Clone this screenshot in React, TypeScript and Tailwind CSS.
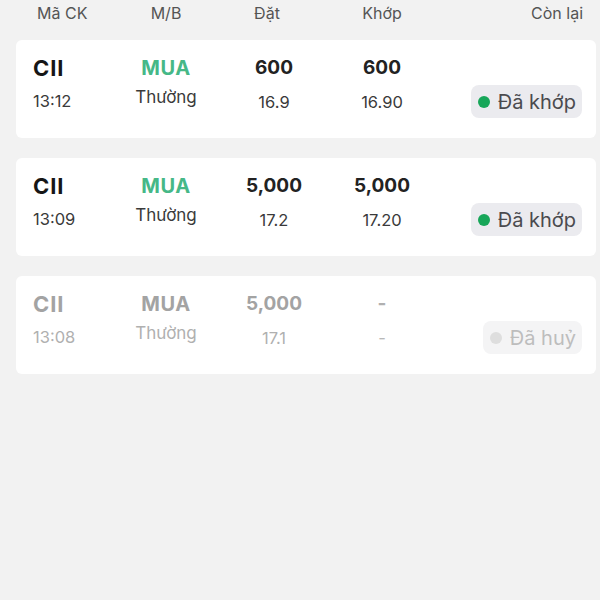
import React from 'react';

type Order = {
  code: string;
  time: string;
  side: string;
  kind: string;
  qty: string;
  price: string;
  matchQty: string;
  matchPrice: string;
  status: string;
  done: boolean;
};

const ORDERS: Order[] = [
  { code: 'CII', time: '13:12', side: 'MUA', kind: 'Thường', qty: '600', price: '16.9', matchQty: '600', matchPrice: '16.90', status: 'Đã khớp', done: true },
  { code: 'CII', time: '13:09', side: 'MUA', kind: 'Thường', qty: '5,000', price: '17.2', matchQty: '5,000', matchPrice: '17.20', status: 'Đã khớp', done: true },
  { code: 'CII', time: '13:08', side: 'MUA', kind: 'Thường', qty: '5,000', price: '17.1', matchQty: '-', matchPrice: '-', status: 'Đã huỷ', done: false },
];

const OrderCard: React.FC<{ order: Order }> = ({ order }) => {
  const live = order.done;
  return (
    <div className="bg-white rounded-md h-[98px] ml-4 mr-[4px] pl-[17px] pr-[14px] pt-[16px] grid grid-cols-[83px_100px_116px_100px_1fr] items-start">
      <div className="flex flex-col gap-[10px]">
        <span className={`h-[24px] leading-[24px] text-[22px] font-bold tracking-[0.04em] ${live ? 'text-[#161616]' : 'text-[#a3a3a3]'}`}>{order.code}</span>
        <span className={`h-[22px] leading-[22px] text-[16.5px] ${live ? 'text-[#3a3a3a]' : 'text-[#b0b0b0]'}`}>{order.time}</span>
      </div>
      <div className="flex flex-col items-center gap-[6px]">
        <span className={`h-[24px] leading-[24px] text-[20px] font-bold tracking-wide ${live ? 'text-[#46b887]' : 'text-[#a3a3a3]'}`}>{order.side}</span>
        <span className={`h-[22px] leading-[22px] text-[17px] ${live ? 'text-[#3a3a3a]' : 'text-[#b0b0b0]'}`}>{order.kind}</span>
      </div>
      <div className="flex flex-col items-center gap-[11px]">
        <span className={`h-[24px] leading-[24px] text-[19px] font-bold ${live ? 'text-[#222]' : 'text-[#a3a3a3]'}`}>{order.qty}</span>
        <span className={`h-[22px] leading-[22px] text-[16.5px] ${live ? 'text-[#3a3a3a]' : 'text-[#b0b0b0]'}`}>{order.price}</span>
      </div>
      <div className="flex flex-col items-center gap-[11px]">
        <span className={`h-[24px] leading-[24px] text-[19px] font-bold ${live ? 'text-[#222]' : 'text-[#b0b0b0]'}`}>{order.matchQty}</span>
        <span className={`h-[22px] leading-[22px] text-[16.5px] ${live ? 'text-[#3a3a3a]' : 'text-[#b8b8b8]'}`}>{order.matchPrice}</span>
      </div>
      <div className="flex justify-end pt-[29px]">
        <div className={`h-[33px] rounded-lg flex items-center gap-[8px] pl-[7px] pr-[6px] ${live ? 'bg-[#ebebef]' : 'bg-[#f4f4f5]'}`}>
          <span className={`w-[12px] h-[12px] rounded-full ${live ? 'bg-[#17a659]' : 'bg-[#dedede]'}`} />
          <span className={`text-[20px] leading-none ${live ? 'text-[#4a4a4e]' : 'text-[#bdbdbd]'}`}>{order.status}</span>
        </div>
      </div>
    </div>
  );
};

export default function App() {
  return (
    <div className="w-[600px] h-[600px] bg-[#f2f2f2] overflow-hidden" style={{ fontFamily: 'Inter, "Noto Sans", sans-serif' }}>
      <div className="h-[26px] pl-[37px] pr-[17px] grid grid-cols-[79px_100px_102px_128px_1fr] items-center text-[16px] text-[#555]">
        <span>Mã CK</span>
        <span className="text-center">M/B</span>
        <span className="text-center">Đặt</span>
        <span className="text-center">Khớp</span>
        <span className="text-right">Còn lại</span>
      </div>
      <div className="mt-[14px] flex flex-col gap-[20px]">
        {ORDERS.map((o, i) => (
          <OrderCard key={i} order={o} />
        ))}
      </div>
    </div>
  );
}
